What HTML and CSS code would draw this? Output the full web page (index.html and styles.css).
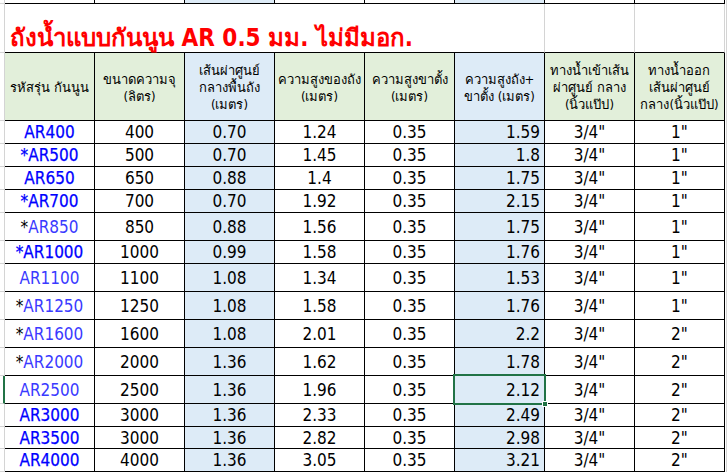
FILE: index.html
```html
<!DOCTYPE html>
<html lang="th">
<head>
<meta charset="utf-8">
<title>ถังน้ำแบบกันนูน</title>
<link rel="stylesheet" href="styles.css">
</head>
<body>
<div class="sheet">
  <div class="row r-top">
    <div class="m"></div>
    <div class="c"></div><div class="c"></div><div class="c b"></div><div class="c"></div>
    <div class="c"></div><div class="c b"></div><div class="c"></div><div class="c"></div>
    <div class="e"></div>
  </div>
  <div class="row r-title">
    <div class="m"></div>
    <div class="c title">ถังน้ำแบบกันนูน AR 0.5 มม. ไม่มีมอก.</div>
    <div class="c g"></div><div class="c g"></div><div class="c g"></div>
    <div class="e"></div>
  </div>
  <div class="row r-head">
    <div class="m"></div>
    <div class="c h">รหัสรุ่น กันนูน</div>
    <div class="c h">ขนาดความจุ<br>(ลิตร)</div>
    <div class="c h hb">เส้นผ่าศูนย์<br>กลางพื้นถัง<br>(เมตร)</div>
    <div class="c h">ความสูงของถัง<br>(เมตร)</div>
    <div class="c h">ความสูงขาตั้ง<br>(เมตร)</div>
    <div class="c h hb">ความสูงถัง+<br>ขาตั้ง (เมตร)</div>
    <div class="c h">ทางน้ำเข้าเส้น<br>ผ่าศูนย์ กลาง<br>(นิ้วแป๊ป)</div>
    <div class="c h">ทางน้ำออก<br>เส้นผ่าศูนย์<br>กลาง(นิ้วแป๊ป)</div>
    <div class="e"></div>
  </div>

  <div class="row r22">
    <div class="m"></div>
    <div class="c code bold">AR400</div><div class="c">400</div><div class="c b">0.70</div><div class="c">1.24</div><div class="c">0.35</div><div class="c b r">1.59</div><div class="c">3/4"</div><div class="c">1"</div>
    <div class="e"></div>
  </div>
  <div class="row r22">
    <div class="m"></div>
    <div class="c code bold">*AR500</div><div class="c">500</div><div class="c b">0.70</div><div class="c">1.45</div><div class="c">0.35</div><div class="c b r">1.8</div><div class="c">3/4"</div><div class="c">1"</div>
    <div class="e"></div>
  </div>
  <div class="row r22">
    <div class="m"></div>
    <div class="c code bold">AR650</div><div class="c">650</div><div class="c b">0.88</div><div class="c">1.4</div><div class="c">0.35</div><div class="c b r">1.75</div><div class="c">3/4"</div><div class="c">1"</div>
    <div class="e"></div>
  </div>
  <div class="row r22">
    <div class="m"></div>
    <div class="c code bold">*AR700</div><div class="c">700</div><div class="c b">0.70</div><div class="c">1.92</div><div class="c">0.35</div><div class="c b r">2.15</div><div class="c">3/4"</div><div class="c">1"</div>
    <div class="e"></div>
  </div>
  <div class="row r27">
    <div class="m"></div>
    <div class="c code"><span class="k">*</span>AR850</div><div class="c">850</div><div class="c b">0.88</div><div class="c">1.56</div><div class="c">0.35</div><div class="c b r">1.75</div><div class="c">3/4"</div><div class="c">1"</div>
    <div class="e"></div>
  </div>
  <div class="row r22">
    <div class="m"></div>
    <div class="c code bold">*AR1000</div><div class="c">1000</div><div class="c b">0.99</div><div class="c">1.58</div><div class="c">0.35</div><div class="c b r">1.76</div><div class="c">3/4"</div><div class="c">1"</div>
    <div class="e"></div>
  </div>
  <div class="row r27">
    <div class="m"></div>
    <div class="c code">AR1100</div><div class="c">1100</div><div class="c b">1.08</div><div class="c">1.34</div><div class="c">0.35</div><div class="c b r">1.53</div><div class="c">3/4"</div><div class="c">1"</div>
    <div class="e"></div>
  </div>
  <div class="row r27">
    <div class="m"></div>
    <div class="c code"><span class="k">*</span>AR1250</div><div class="c">1250</div><div class="c b">1.08</div><div class="c">1.58</div><div class="c">0.35</div><div class="c b r">1.76</div><div class="c">3/4"</div><div class="c">1"</div>
    <div class="e"></div>
  </div>
  <div class="row r27">
    <div class="m"></div>
    <div class="c code"><span class="k">*</span>AR1600</div><div class="c">1600</div><div class="c b">1.08</div><div class="c">2.01</div><div class="c">0.35</div><div class="c b r">2.2</div><div class="c">3/4"</div><div class="c">2"</div>
    <div class="e"></div>
  </div>
  <div class="row r27">
    <div class="m"></div>
    <div class="c code"><span class="k">*</span>AR2000</div><div class="c">2000</div><div class="c b">1.36</div><div class="c">1.62</div><div class="c">0.35</div><div class="c b r">1.78</div><div class="c">3/4"</div><div class="c">2"</div>
    <div class="e"></div>
  </div>
  <div class="row r27">
    <div class="m sel-row"></div>
    <div class="c code">AR2500</div><div class="c">2500</div><div class="c b">1.36</div><div class="c">1.96</div><div class="c">0.35</div><div class="c b r active">2.12<span class="handle"></span></div><div class="c">3/4"</div><div class="c">2"</div>
    <div class="e"></div>
  </div>
  <div class="row r22">
    <div class="m"></div>
    <div class="c code bold">AR3000</div><div class="c">3000</div><div class="c b">1.36</div><div class="c">2.33</div><div class="c">0.35</div><div class="c b r">2.49</div><div class="c">3/4"</div><div class="c">2"</div>
    <div class="e"></div>
  </div>
  <div class="row r21">
    <div class="m"></div>
    <div class="c code bold">AR3500</div><div class="c">3000</div><div class="c b">1.36</div><div class="c">2.82</div><div class="c">0.35</div><div class="c b r">2.98</div><div class="c">3/4"</div><div class="c">2"</div>
    <div class="e"></div>
  </div>
  <div class="row r22">
    <div class="m"></div>
    <div class="c code bold">AR4000</div><div class="c">4000</div><div class="c b">1.36</div><div class="c">3.05</div><div class="c">0.35</div><div class="c b r">3.21</div><div class="c">3/4"</div><div class="c">2"</div>
    <div class="e"></div>
  </div>
</div>
</body>
</html>
```
FILE: styles.css
```css
* { box-sizing: border-box; }
html, body { margin: 0; padding: 0; background: #fff; }
body {
  font-family: "DejaVu Sans Condensed", "DejaVu Sans", "Noto Sans", sans-serif;
  font-stretch: condensed;
  color: #000;
  width: 727px;
  height: 472px;
  overflow: hidden;
}
.sheet { display: flex; flex-direction: column; }
.row {
  display: grid;
  grid-template-columns: 5px repeat(8, 90px) 2px;
}
.m { border-right: 1px solid #d4d4d4; border-bottom: 1px solid #d4d4d4; }
.e { border-right: 1px solid #d4d4d4; }
.c {
  border-right: 1px solid #000;
  border-bottom: 1px solid #000;
  display: flex;
  align-items: center;
  justify-content: center;
  font-size: 17px;
  white-space: nowrap;
}
.b { background: #ddebf7; }
.r { justify-content: flex-end; padding-right: 4px; }

.r-top { height: 4px; }
.r-title { height: 49px; }
.r-head { height: 68px; }
.r22 { height: 23px; }
.r21 { height: 22px; }
.r27 { height: 28px; }

.title {
  grid-column: span 5;
  border-right: none;
  justify-content: flex-start;
  align-items: flex-end;
  padding: 0 0 2px 5px;
  color: #ff0000;
  font-weight: bold;
  font-size: 24px;
  line-height: 1;
  font-stretch: normal;
  overflow: visible;
}
.g { border-right-color: #d4d4d4; }

.h {
  background: #e2efda;
  font-size: 13px;
  line-height: 17px;
  text-align: center;
  padding-top: 2px;
}
.h.hb { background: #ddebf7; }

.code { color: #3a3aff; }
.code.bold { color: #0000ff; -webkit-text-stroke: 0.25px #0000ff; }
.k { color: #000; }

.sel-row { border-right: 2px solid #217346; }
.active { position: relative; }
.active::after {
  content: "";
  position: absolute;
  left: -2px; top: -2px; right: -2px; bottom: -2px;
  border: 2px solid #217346;
  pointer-events: none;
}
.handle {
  position: absolute;
  right: -4px; bottom: -4px;
  width: 6px; height: 6px;
  background: #217346;
  border: 1px solid #fff;
  z-index: 2;
}
```
